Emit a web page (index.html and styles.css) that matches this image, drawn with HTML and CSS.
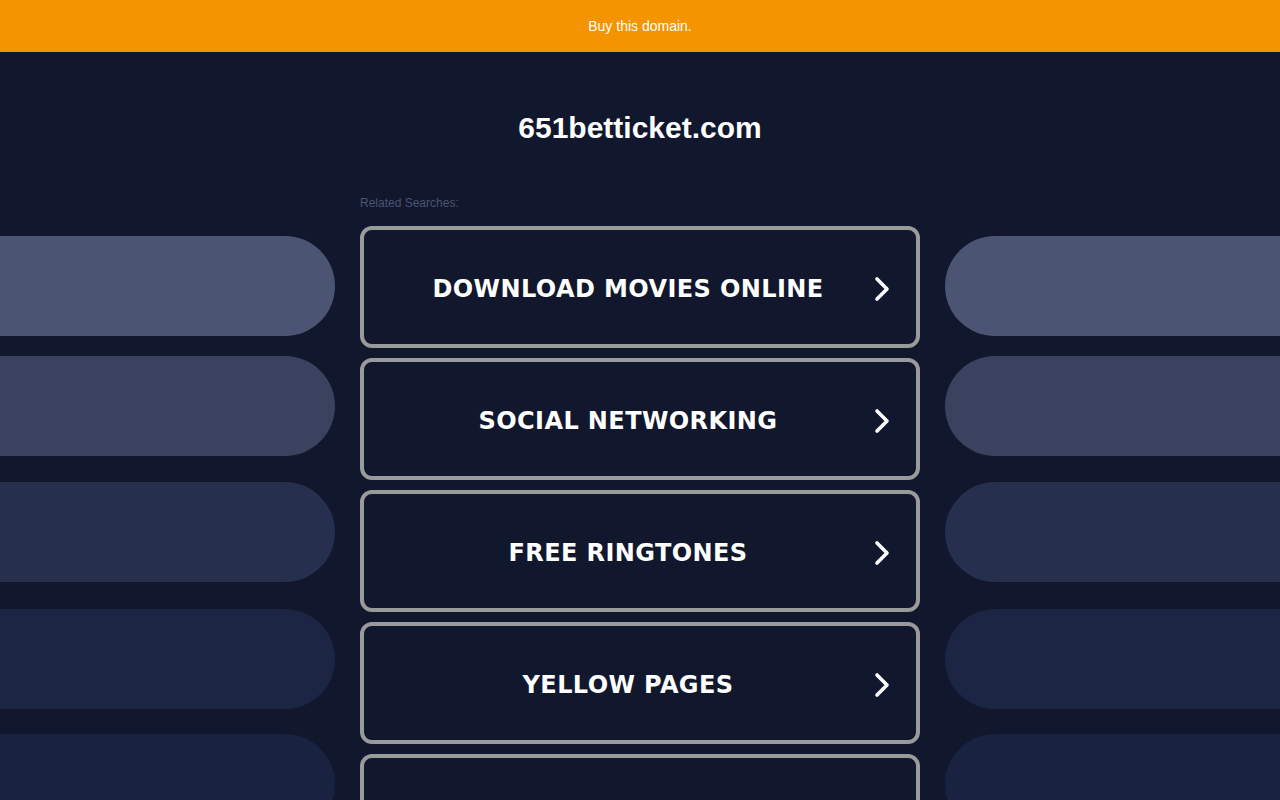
FILE: index.html
```html
<!DOCTYPE html>
<html lang="en">
<head>
<meta charset="utf-8">
<title>651betticket.com</title>
<link rel="stylesheet" href="styles.css">
</head>
<body>
<div class="topbar"><a class="buy" href="#">Buy this domain.</a></div>
<div class="main">
  <div class="side side-left">
    <div class="pill p1"></div>
    <div class="pill p2"></div>
    <div class="pill p3"></div>
    <div class="pill p4"></div>
    <div class="pill p5"></div>
  </div>
  <div class="center">
    <h1 class="domain">651betticket.com</h1>
    <div class="related">Related Searches:</div>
    <div class="links">
      <a class="link" href="#"><span class="label">DOWNLOAD MOVIES ONLINE</span><svg class="chev" viewBox="0 0 20 26" width="20" height="26"><path d="M5 3 L15 13 L5 23" fill="none" stroke="#fff" stroke-width="3.6" stroke-linecap="round" stroke-linejoin="round"/></svg></a>
      <a class="link" href="#"><span class="label">SOCIAL NETWORKING</span><svg class="chev" viewBox="0 0 20 26" width="20" height="26"><path d="M5 3 L15 13 L5 23" fill="none" stroke="#fff" stroke-width="3.6" stroke-linecap="round" stroke-linejoin="round"/></svg></a>
      <a class="link" href="#"><span class="label">FREE RINGTONES</span><svg class="chev" viewBox="0 0 20 26" width="20" height="26"><path d="M5 3 L15 13 L5 23" fill="none" stroke="#fff" stroke-width="3.6" stroke-linecap="round" stroke-linejoin="round"/></svg></a>
      <a class="link" href="#"><span class="label">YELLOW PAGES</span><svg class="chev" viewBox="0 0 20 26" width="20" height="26"><path d="M5 3 L15 13 L5 23" fill="none" stroke="#fff" stroke-width="3.6" stroke-linecap="round" stroke-linejoin="round"/></svg></a>
      <a class="link" href="#"><span class="label">CHEAP FLIGHTS</span><svg class="chev" viewBox="0 0 20 26" width="20" height="26"><path d="M5 3 L15 13 L5 23" fill="none" stroke="#fff" stroke-width="3.6" stroke-linecap="round" stroke-linejoin="round"/></svg></a>
    </div>
  </div>
  <div class="side side-right">
    <div class="pill p1"></div>
    <div class="pill p2"></div>
    <div class="pill p3"></div>
    <div class="pill p4"></div>
    <div class="pill p5"></div>
  </div>
</div>
</body>
</html>
```

FILE: styles.css
```css
html, body {
  margin: 0;
  padding: 0;
  background: #11172d;
  height: 800px;
  overflow: hidden;
  font-family: "Liberation Sans", Arial, sans-serif;
}
.topbar {
  height: 52px;
  background: #f39400;
  display: flex;
  align-items: center;
  justify-content: center;
}
.buy {
  color: #fff;
  font-size: 14px;
  text-decoration: none;
  line-height: 16px;
}
.main {
  display: flex;
  gap: 25px;
}
.side {
  width: 335px;
  flex: none;
  padding-top: 184px;
  display: flex;
  flex-direction: column;
}
.pill {
  height: 100px;
  flex: none;
}
.side-left .pill { border-radius: 0 50px 50px 0; }
.side-right .pill { border-radius: 50px 0 0 50px; }
.p1 { background: #4b5573; }
.p2 { background: #3a4260; margin-top: 20px; }
.p3 { background: #262f4d; margin-top: 26px; }
.p4 { background: #1c2544; margin-top: 27px; }
.p5 { background: #1a2242; margin-top: 25px; }
.center {
  width: 560px;
  flex: none;
  padding-top: 58px;
}
.domain {
  margin: 0;
  text-align: center;
  color: #fff;
  font-size: 30px;
  line-height: 36px;
  font-weight: bold;
}
.related {
  margin-top: 50px;
  font-size: 12px;
  line-height: 14px;
  color: #4b5573;
}
.links {
  margin-top: 16px;
  display: flex;
  flex-direction: column;
  gap: 10px;
}
.link {
  box-sizing: border-box;
  height: 122px;
  border: 4px solid #9a9a9a;
  border-radius: 12px;
  display: flex;
  align-items: center;
  padding: 3px 24px 0 20px;
  text-decoration: none;
  color: #fff;
}
.label {
  flex: 1;
  text-align: center;
  font-family: "DejaVu Sans", Verdana, sans-serif;
  font-weight: bold;
  font-size: 24px;
  letter-spacing: 0.4px;
}
.chev {
  flex: none;
  display: block;
}
```
